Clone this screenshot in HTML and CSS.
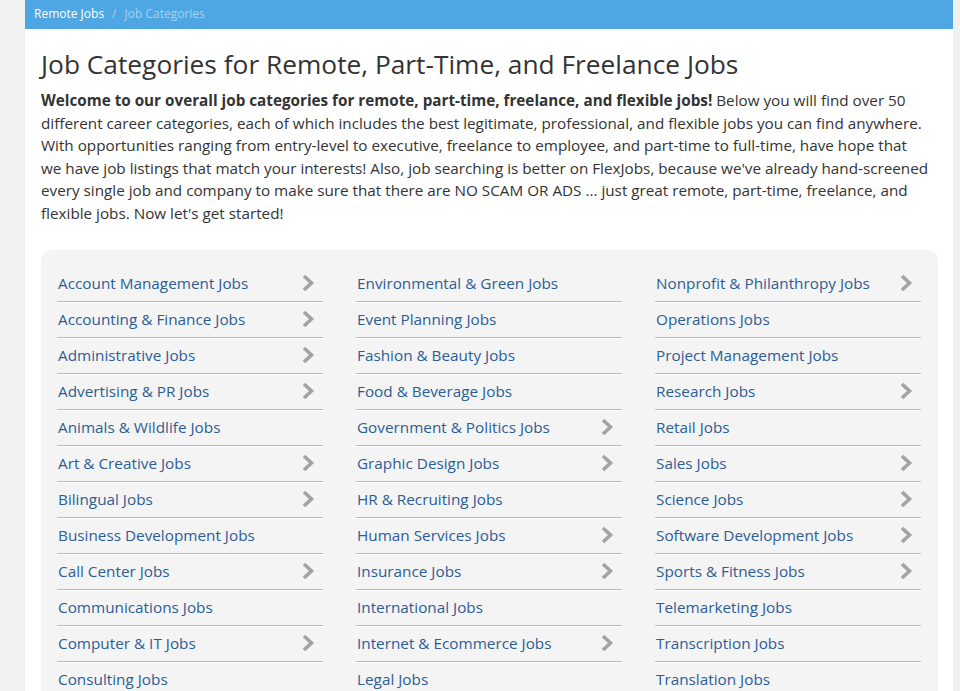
FILE: index.html
```html
<!DOCTYPE html>
<html lang="en">

<head>
    <meta charset="utf-8">
    <meta name="viewport" content="width=device-width, initial-scale=1.0">
    <title>Job Categories for Remote, Part-Time, and Freelance Jobs</title>
    <link rel="stylesheet" href="styles.css">
</head>

<body>
    <div class="page">
        <div class="crumbs">
            <a href="#">Remote Jobs</a>
            <span class="sep">/</span>
            <span class="current">Job Categories</span>
        </div>

        <div class="content">
            <h1>Job Categories for Remote, Part-Time, and Freelance Jobs</h1>
            <p class="intro"><b>Welcome to our overall job categories for remote, part-time, freelance, and flexible jobs!</b> Below you will find over 50 different career categories, each of which includes the best legitimate, professional, and flexible jobs you can find anywhere. With opportunities ranging from entry-level to executive, freelance to employee, and part-time to full-time, have hope that we have job listings that match your interests! Also, job searching is better on FlexJobs, because we've already hand-screened every single job and company to make sure that there are NO SCAM OR ADS ... just great remote, part-time, freelance, and flexible jobs. Now let's get started!</p>

            <div class="cats">
                <ul class="col">
                    <li class="more"><a href="#">Account Management Jobs</a></li>
                    <li class="more"><a href="#">Accounting &amp; Finance Jobs</a></li>
                    <li class="more"><a href="#">Administrative Jobs</a></li>
                    <li class="more"><a href="#">Advertising &amp; PR Jobs</a></li>
                    <li><a href="#">Animals &amp; Wildlife Jobs</a></li>
                    <li class="more"><a href="#">Art &amp; Creative Jobs</a></li>
                    <li class="more"><a href="#">Bilingual Jobs</a></li>
                    <li><a href="#">Business Development Jobs</a></li>
                    <li class="more"><a href="#">Call Center Jobs</a></li>
                    <li><a href="#">Communications Jobs</a></li>
                    <li class="more"><a href="#">Computer &amp; IT Jobs</a></li>
                    <li><a href="#">Consulting Jobs</a></li>
                </ul>
                <ul class="col">
                    <li><a href="#">Environmental &amp; Green Jobs</a></li>
                    <li><a href="#">Event Planning Jobs</a></li>
                    <li><a href="#">Fashion &amp; Beauty Jobs</a></li>
                    <li><a href="#">Food &amp; Beverage Jobs</a></li>
                    <li class="more"><a href="#">Government &amp; Politics Jobs</a></li>
                    <li class="more"><a href="#">Graphic Design Jobs</a></li>
                    <li><a href="#">HR &amp; Recruiting Jobs</a></li>
                    <li class="more"><a href="#">Human Services Jobs</a></li>
                    <li class="more"><a href="#">Insurance Jobs</a></li>
                    <li><a href="#">International Jobs</a></li>
                    <li class="more"><a href="#">Internet &amp; Ecommerce Jobs</a></li>
                    <li><a href="#">Legal Jobs</a></li>
                </ul>
                <ul class="col">
                    <li class="more"><a href="#">Nonprofit &amp; Philanthropy Jobs</a></li>
                    <li><a href="#">Operations Jobs</a></li>
                    <li><a href="#">Project Management Jobs</a></li>
                    <li class="more"><a href="#">Research Jobs</a></li>
                    <li><a href="#">Retail Jobs</a></li>
                    <li class="more"><a href="#">Sales Jobs</a></li>
                    <li class="more"><a href="#">Science Jobs</a></li>
                    <li class="more"><a href="#">Software Development Jobs</a></li>
                    <li class="more"><a href="#">Sports &amp; Fitness Jobs</a></li>
                    <li><a href="#">Telemarketing Jobs</a></li>
                    <li><a href="#">Transcription Jobs</a></li>
                    <li><a href="#">Translation Jobs</a></li>
                </ul>
            </div>
        </div>
    </div>
</body>

</html>
```

FILE: styles.css
```css
html,
body {
    margin: 0;
    background: #f1f1f1;
    font-family: "Open Sans", "Noto Sans", sans-serif;
    color: #333;
}
.page {
    margin-left: 25px;
    width: 928px;
    min-height: 691px;
    background: #fff;
}
.crumbs {
    box-sizing: border-box;
    display: flex;
    align-items: center;
    gap: 8px;
    height: 29px;
    padding: 0 0 3px 9px;
    background: #4ea6e2;
    font-size: 12px;
}
.crumbs a {
    color: #fff;
    text-decoration: none;
}
.crumbs .sep,
.crumbs .current {
    color: #a8d2f1;
}
.content {
    padding: 0 24px 0 16px;
}
h1 {
    margin: 0;
    padding-top: 17px;
    font-size: 26.3px;
    font-weight: 400;
    line-height: 36px;
    color: #333;
}
.intro {
    margin: 7px 0 0;
    font-size: 15.25px;
    line-height: 22.6px;
}
.intro b {
    font-weight: 700;
}
.cats {
    display: grid;
    grid-template-columns: repeat(3, 266px);
    column-gap: 33px;
    margin: 25px -9px 0 0;
    padding: 16px 16px 0;
    background: #f4f4f4;
    border-radius: 10px 10px 0 0;
}
.col {
    margin: 0;
    padding: 0;
    list-style: none;
}
.col li {
    display: flex;
    align-items: center;
    justify-content: space-between;
    height: 35px;
    padding-left: 1px;
    border-bottom: 1px solid #b9b9b9;
    box-shadow: 0 1px 0 #fff;
    font-size: 15.3px;
}
.col li a {
    color: #2c5d97;
    text-decoration: none;
}
.col li.more::after {
    content: "";
    width: 14px;
    height: 18px;
    margin-right: 8px;
    background: url("data:image/svg+xml;utf8,<svg xmlns='http://www.w3.org/2000/svg' viewBox='0 0 14 18'><path d='M3 2l7.5 7L3 16' fill='none' stroke='%23a3a3a3' stroke-width='3.6'/></svg>") no-repeat center;
}
```
